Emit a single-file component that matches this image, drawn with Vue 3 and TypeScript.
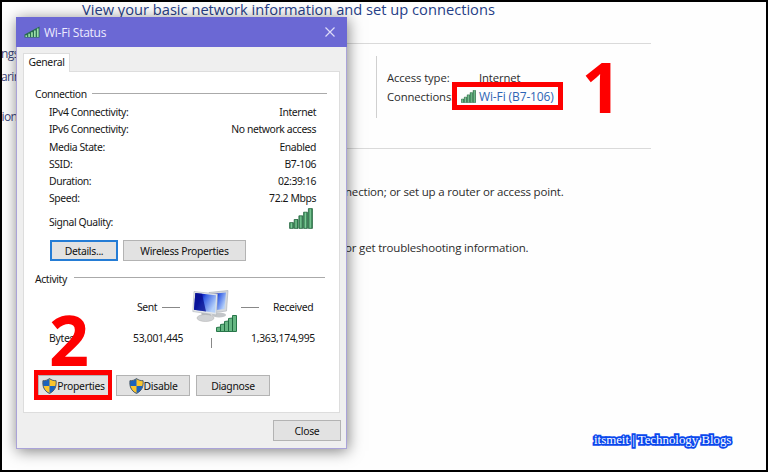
<script setup lang="ts">
interface Row { label: string; value: string }

const rows: Row[] = [
  { label: 'IPv4 Connectivity:', value: 'Internet' },
  { label: 'IPv6 Connectivity:', value: 'No network access' },
  { label: 'Media State:', value: 'Enabled' },
  { label: 'SSID:', value: 'B7-106' },
  { label: 'Duration:', value: '02:39:16' },
  { label: 'Speed:', value: '72.2 Mbps' },
]
const shielded: string[] = ['Properties', 'Disable']
</script>

<template>
  <main class="screen">
    <svg class="defs" width="0" height="0" aria-hidden="true">
      <defs>
        <linearGradient id="bar" x1="0" y1="0" x2="1" y2="0">
          <stop offset="0" stop-color="#2b7f4c" />
          <stop offset=".5" stop-color="#7cc795" />
          <stop offset="1" stop-color="#18693a" />
        </linearGradient>
        <linearGradient id="glass" x1="0" y1="0" x2="1" y2=".5">
          <stop offset="0" stop-color="#0812a0" />
          <stop offset=".35" stop-color="#1024c4" />
          <stop offset=".5" stop-color="#3a62e4" />
          <stop offset="1" stop-color="#b4d0fa" />
        </linearGradient>
        <symbol id="signal" viewBox="0 0 24 21">
          <g fill="url(#bar)" stroke="#24663f" stroke-width=".8">
            <path d="M.6 14.600h3.800v5.800H.6z" /><path d="M5.200 11.500H9v8.900H5.200z" />
            <path d="M9.900 7.800h3.800v12.600H9.900z" /><path d="M14.600 4.200h3.800v16.200h-3.800z" />
            <path d="M19.400.6h4v19.800h-4z" />
          </g>
        </symbol>
        <symbol id="shield" viewBox="0 0 16 17">
          <path d="M8 .5C6 2.200 3.500 3 1 2.800c-.6 6 1 10.800 7 13.700 6-2.900 7.600-7.700 7-13.700C12.500 3 10 2.200 8 .5z" fill="#1b62bd" />
          <path d="M8 .8C10 2.300 12.500 3 14.900 2.900c.2 2 .1 3.800-.4 5.500H8z" fill="#fbc52d" />
          <path d="M8 8.400H1.500C2.400 12 4.400 14.600 8 16.300z" fill="#fbc52d" />
          <path d="M8 .5C6 2.200 3.500 3 1 2.800c-.6 6 1 10.800 7 13.700 6-2.900 7.600-7.700 7-13.700C12.500 3 10 2.200 8 .5z" fill="none" stroke="#4f5c66" stroke-width="1" />
        </symbol>
      </defs>
    </svg>

    <aside class="side">
      <span class="s1">ngs</span><span class="s2">aring</span><span class="s3">ions</span>
    </aside>
    <section class="page">
      <h1><span>View your basic network information and set up connections</span></h1>
      <div class="network">
        <dl>
          <dt>Access type:</dt><dd>Internet</dd>
          <dt>Connections:</dt>
          <dd class="wifi"><svg width="15" height="13"><use href="#signal" width="15" height="13" /></svg><span>Wi-Fi (B7-106)</span></dd>
        </dl>
      </div>
      <p class="p1">nection; or set up a router or access point.</p>
      <p class="p2">or get troubleshooting information.</p>
    </section>

    <article class="window">
      <header>
        <svg class="hsig" viewBox="0 0 16 12">
          <path d="M.5 8.500 15.500.5v11H.5z" fill="#286b50" />
          <path d="M1.500 9.200h1.600V11H1.500zM4.300 7.800h1.600V11H4.300zM7.100 6.200h1.700V11H7.100zM10 4.600h1.700V11H10zM12.900 2.400h1.700V11h-1.700z" fill="#9be0a8" />
        </svg>
        <span class="title">Wi-Fi Status</span>
        <svg class="x" viewBox="0 0 10 10"><path d="M.5.5l9 9M9.500.5l-9 9" stroke="#dedcf8" stroke-width="1.200" /></svg>
      </header>
      <div class="tab">General</div>
      <div class="panel">
        <div class="legend conn"><span>Connection</span><i></i></div>
        <div class="rows">
          <div v-for="r in rows" :key="r.label" class="row"><span>{{ r.label }}</span><span>{{ r.value }}</span></div>
        </div>
        <div class="quality"><span>Signal Quality:</span><svg width="24" height="21"><use href="#signal" /></svg></div>
        <div class="buttons top">
          <button class="details">Details...</button><button class="wireless">Wireless Properties</button>
        </div>
        <div class="legend act"><span>Activity</span><i></i></div>
        <div class="flow">
          <span class="sent">Sent</span><i></i>
          <svg class="pc" viewBox="0 0 46 44">
            <path d="M17 2.500 36 .5 34.500 21 19 23z" fill="#d5d8dc" stroke="#a8adb5" stroke-width=".6" />
            <path d="M19 4 34 2.500 32.500 19 20 20.500z" fill="url(#glass)" />
            <ellipse cx="27" cy="25" rx="7" ry="2.500" fill="#c3c6c9" />
            <path d="M9 21h9l1 5-9 1z" fill="#b7bbbf" />
            <ellipse cx="13.500" cy="28" rx="8.500" ry="3.500" fill="#d0d2d4" stroke="#aaa" stroke-width=".5" />
            <path d="M2 1.500 25.500 4 24.500 25 .8 21.500z" fill="#e4e7ea" stroke="#aeb3bb" stroke-width=".6" />
            <path d="M3.300 3 24 5.200 23.300 22.800 2 19.700z" fill="url(#glass)" />
            <path d="M3.300 3 10 3.700 14 21.500 2 19.700z" fill="#070e8c" opacity=".75" />
            <svg x="24" y="25" width="21" height="17" viewBox="0 0 21 17">
              <path d="M.5 16.500v-4L4.500 12v-2.500l4-.5V6.500l4-.5V3.500l4-.5V.5h4v16z" fill="#66b783" stroke="#28764a" />
              <path d="M4.500 12v4M8.500 9v7M12.500 6v10M16.500 3v13" stroke="#226b42" stroke-width="1" />
            </svg>
          </svg>
          <i class="second"></i><span class="received">Received</span>
        </div>
        <div class="bytes"><span class="b">Bytes:</span><span class="out">53,001,445</span><i></i><span class="in">1,363,174,995</span></div>
        <div class="buttons bottom">
          <button v-for="s in shielded" :key="s" :class="s.toLowerCase()"><svg width="15" height="16"><use href="#shield" /></svg>{{ s }}</button>
          <button class="diagnose">Diagnose</button>
        </div>
      </div>
      <button class="close">Close</button>
    </article>

    <div class="mark mark-wifi"></div><div class="mark mark-prop"></div>
    <b class="digit one">1</b><b class="digit two">2</b>
    <footer>itsmeit | Technology Blogs</footer>
  </main>
</template>

<style>
body { margin: 0; overflow: hidden; }
</style>
<style scoped>
* { box-sizing: border-box; }
.screen { position: relative; width: 768px; height: 472px; border: 2px solid #000; background: #fefefe; overflow: hidden; display: flex; font-family: "Open Sans", "Noto Sans", sans-serif; color: #2c2c2c; white-space: nowrap; }
.defs { position: absolute; }
.side { width: 80px; display: flex; flex-direction: column; font-size: 12px; letter-spacing: -.6px; line-height: 16px; color: #3c477d; padding-top: 44px; }
.side span { margin-left: -1px; }
.side .s2 { margin-top: 7px; } .side .s3 { margin-top: 24px; margin-left: -.5px; }
.page { width: 569px; }
h1 { margin: 0; height: 42px; border-bottom: 1px solid #dadada; font-size: 14.67px; font-weight: 400; line-height: 14px; color: #264087; }
.network { height: 105px; border-bottom: 1px solid #dadada; padding: 12px 0 0 294px; }
dl { margin: 0; height: 62px; border-left: 1px solid #d0d0d0; padding: 12px 0 0 10px; display: grid; grid-template-columns: 92px auto; grid-auto-rows: 19px; font-size: 11.3px; line-height: 19px; letter-spacing: -.12px; }
dd { margin: 0; }
.wifi { display: flex; align-items: center; margin-left: -18px; gap: 3px; color: #2d64b5; font-size: 12px; }
p { margin: 0; padding-left: 263px; font-size: 11.5px; line-height: 16px; letter-spacing: -.18px; }
.p1 { padding-top: 35px; } .p2 { padding-top: 40px; }
.window { position: absolute; left: 14px; top: 15px; width: 331px; height: 432px; background: #efefef; border: 1px solid #aaa3d8; border-top: 0; box-shadow: 1px 2px 14px rgba(0,0,0,.5); font: 10.4px "Noto Sans", sans-serif; letter-spacing: -.4px; color: #161616; }
header { height: 30px; margin: 0 -1px; background: #6b68d4; display: flex; align-items: center; color: #eeecff; font: 12px "Open Sans", sans-serif; letter-spacing: -.25px; }
.hsig { width: 16px; height: 12px; margin-left: 8px; } .title { margin-left: 4px; }
.x { width: 10px; height: 10px; margin-left: auto; margin-right: 12px; }
.tab { position: relative; width: 47px; height: 19px; margin: 6px 0 -1px 6px; background: #fff; border: 1px solid #ddd; border-bottom: 0; text-align: center; line-height: 17px; letter-spacing: -.3px; }
.panel { width: 317px; height: 342px; margin-left: 6px; background: #fff; border: 1px solid #ddd; padding-top: 14px; }
.legend { display: flex; height: 16px; line-height: 16px; padding-left: 11px; }
.legend i { height: 1px; background: #aaa; margin-top: 7px; width: 235px; margin-left: auto; }
.legend.conn i { margin-right: 12px; } .legend.act i { width: 251px; margin-right: 14px; margin-top: 6px; }
.rows { padding: 2px 23px .5px 25px; }
.row { display: flex; justify-content: space-between; height: 17.3px; line-height: 17.3px; }
.quality { display: flex; justify-content: space-between; padding: 0 26px 0 25px; height: 21px; line-height: 28px; }
.buttons { display: flex; }
button { height: 21px; padding: 0; border: 1px solid #b3b3b3; border-radius: 0; background: #e2e2e2; font: 10.4px/18px "Noto Sans", sans-serif; letter-spacing: -.3px; color: #111; display: flex; justify-content: center; align-items: center; }
.top { padding: 11px 0 0 26px; gap: 5px; }
.details { width: 68px; border: 2px solid #247cd5; } .wireless { width: 123px; }
.act { margin-top: 10px; }
.flow { display: flex; height: 44px; padding: 3px 0 0 113px; }
.flow span { line-height: 34px; } .sent { width: 25px; }
.flow i { width: 18px; height: 1px; background: #888; margin-top: 17px; }
.pc { width: 46px; height: 44px; margin-left: 12px; flex: none; }
.flow .second { margin-left: 3px; } .received { margin-left: 14px; }
.bytes { display: flex; height: 16px; line-height: 15px; padding-left: 25px; letter-spacing: -.29px; }
.b { width: 84px; } .out { width: 78px; }
.bytes i { width: 1px; height: 10px; margin-top: 7px; background: #888; } .in { margin-left: 39px; }
.bottom { padding: 28px 0 0 14px; gap: 6px; }
.properties { width: 71px; } .disable { width: 74px; margin-left: 1px; } .diagnose { width: 74px; }
.close { width: 68px; margin: 7px 0 0 256px; }
.mark { position: absolute; border: 5px solid #fe0000; }
.mark-wifi { left: 450px; top: 80px; width: 111px; height: 28px; }
.mark-prop { left: 32px; top: 368px; width: 78px; height: 30px; border-width: 5px 4px; }
.digit { position: absolute; color: #fe0000; font: 700 70px/70px "Open Sans", sans-serif; }
.one { left: 579.5px; top: 49px; } .two { left: 47px; top: 302px; }
footer { position: absolute; left: 592px; top: 430px; font: 12.850px/16px "Liberation Serif", serif; color: #fff; -webkit-text-stroke: 3.500px #0b49ed; paint-order: stroke fill; text-shadow: 0 0 2px #0b49ed; }
</style>
